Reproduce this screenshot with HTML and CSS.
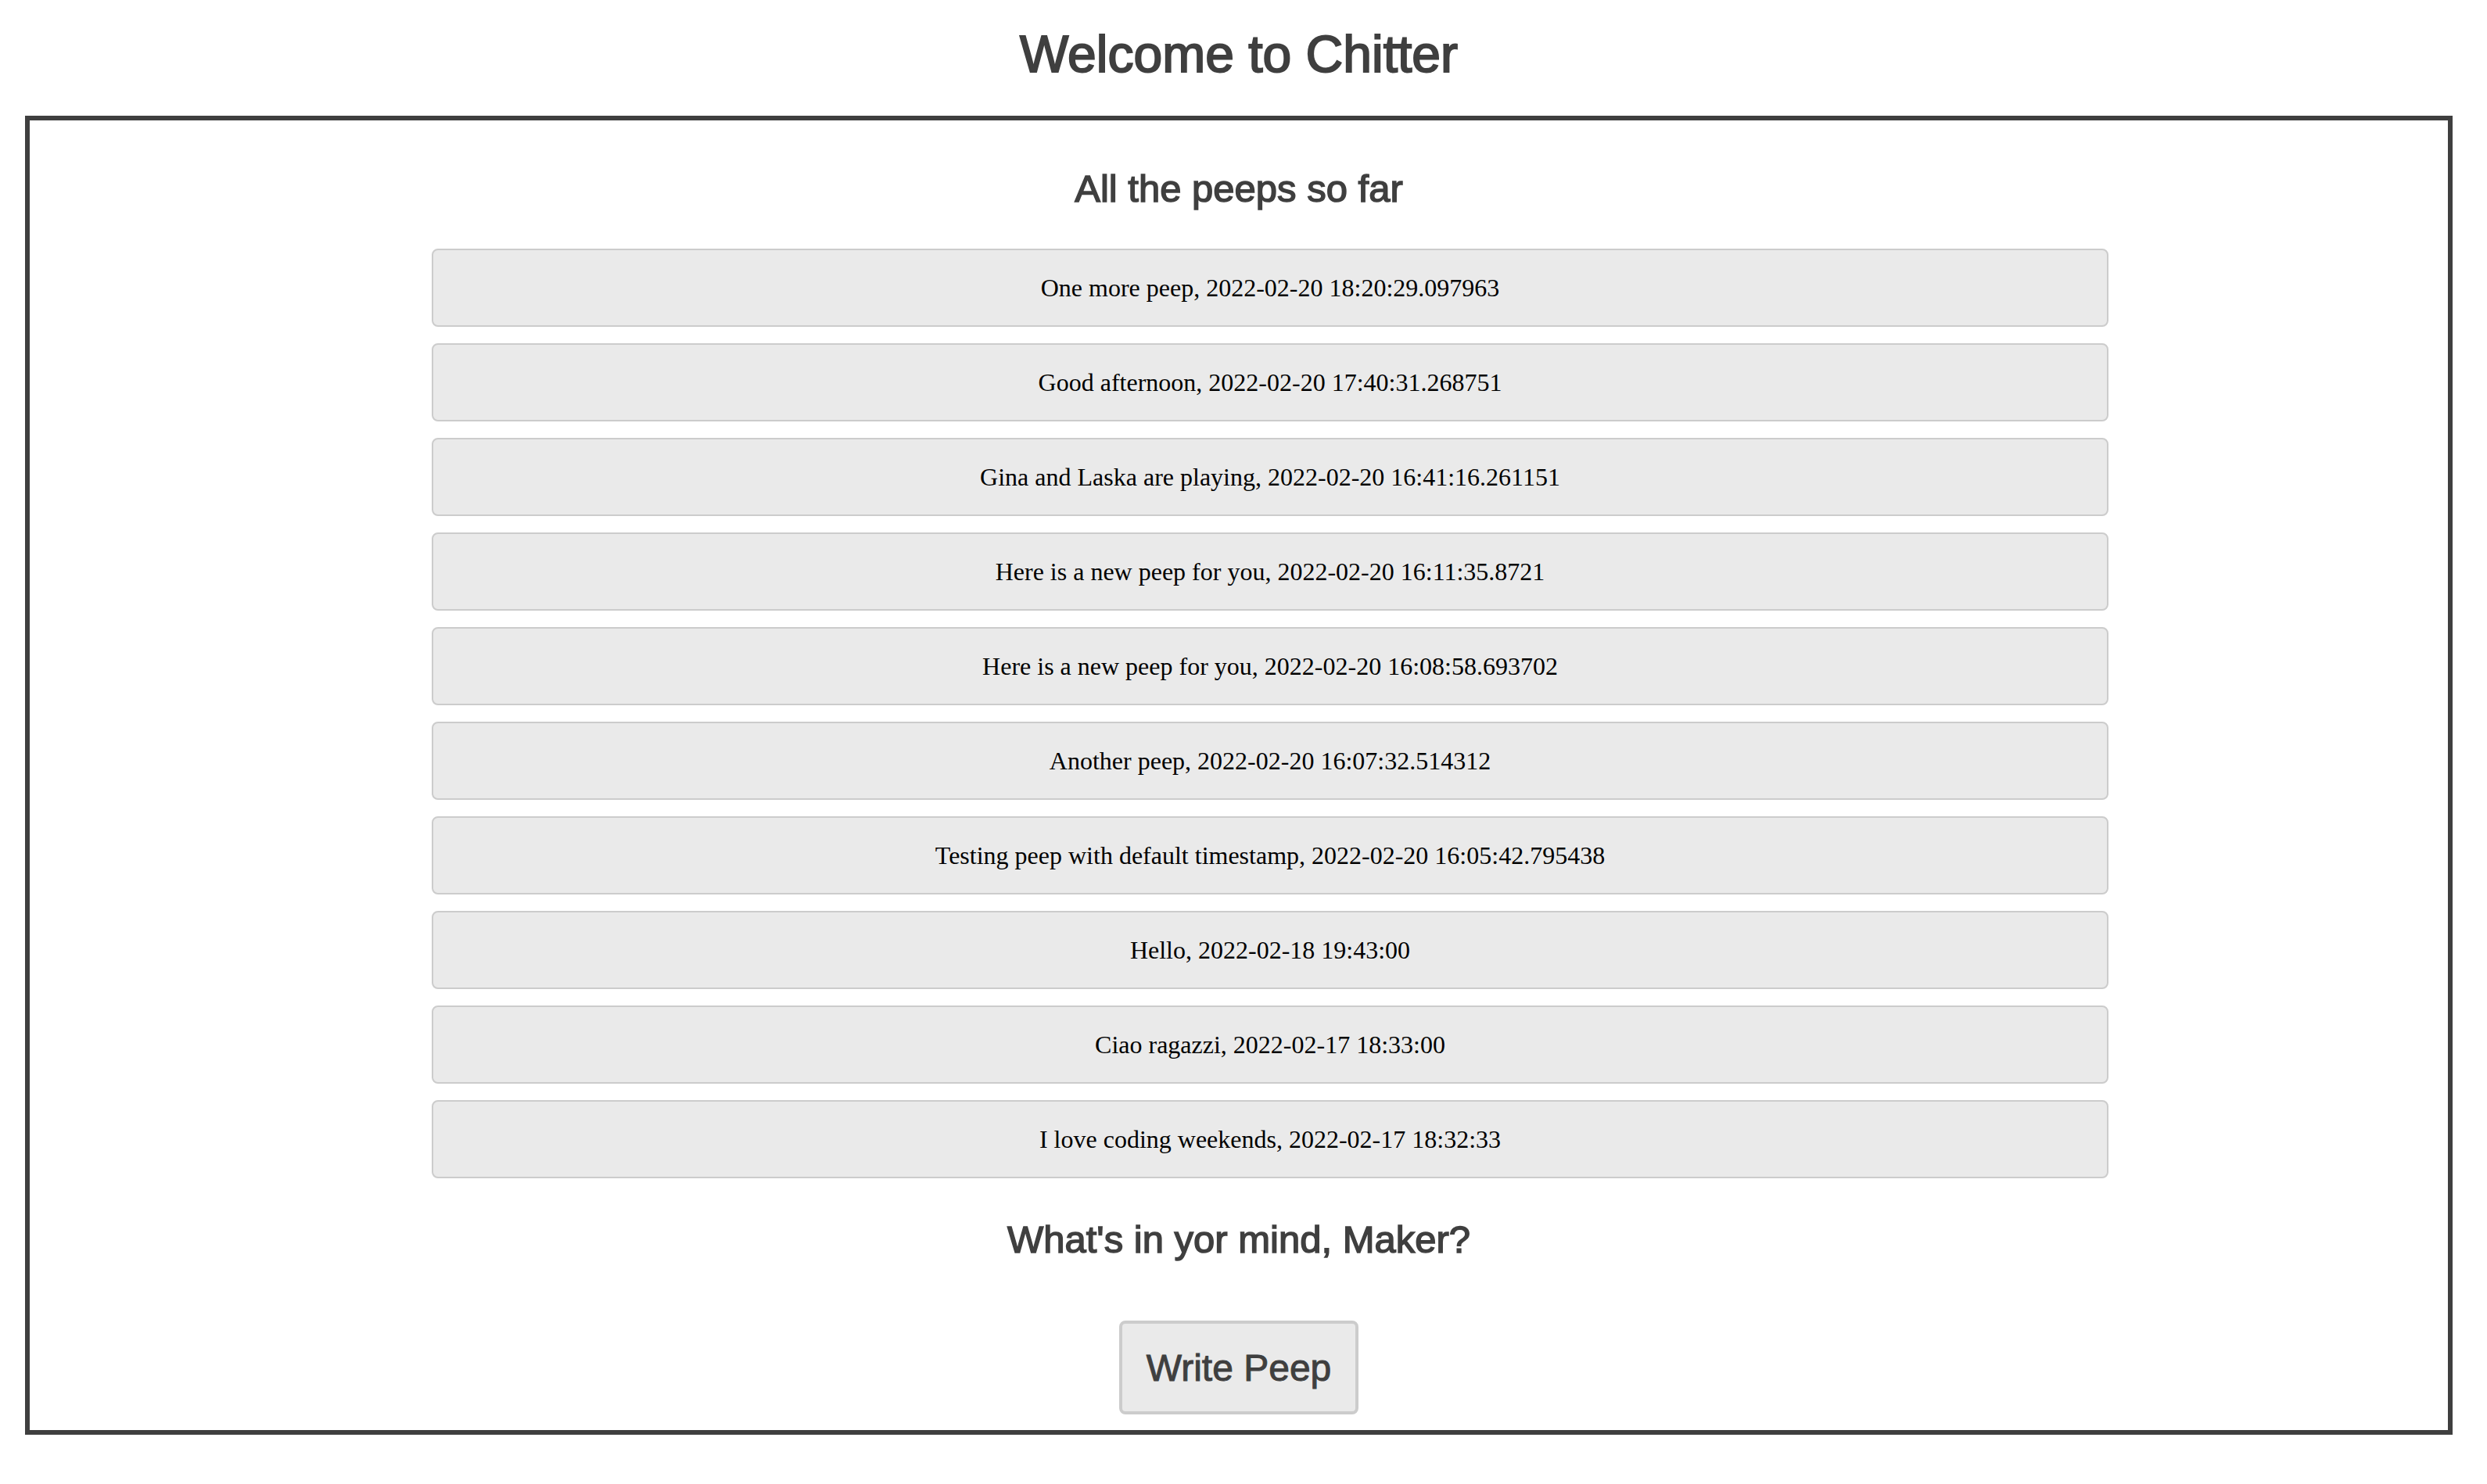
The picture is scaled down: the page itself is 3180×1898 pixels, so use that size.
FILE: index.html
```html
<!DOCTYPE html>
<html lang="en">
<head>
<meta charset="utf-8">
<title>Chitter</title>
<link rel="stylesheet" href="styles.css">
</head>
<body>
<div class="page">
  <h1 class="title">Welcome to Chitter</h1>
  <main class="frame">
    <h2 class="heading">All the peeps so far</h2>
    <ul class="peeps">
      <li class="peep">One more peep, 2022-02-20 18:20:29.097963</li>
      <li class="peep">Good afternoon, 2022-02-20 17:40:31.268751</li>
      <li class="peep">Gina and Laska are playing, 2022-02-20 16:41:16.261151</li>
      <li class="peep">Here is a new peep for you, 2022-02-20 16:11:35.8721</li>
      <li class="peep">Here is a new peep for you, 2022-02-20 16:08:58.693702</li>
      <li class="peep">Another peep, 2022-02-20 16:07:32.514312</li>
      <li class="peep">Testing peep with default timestamp, 2022-02-20 16:05:42.795438</li>
      <li class="peep">Hello, 2022-02-18 19:43:00</li>
      <li class="peep">Ciao ragazzi, 2022-02-17 18:33:00</li>
      <li class="peep">I love coding weekends, 2022-02-17 18:32:33</li>
    </ul>
    <h2 class="heading heading-mind">What's in yor mind, Maker?</h2>
    <div class="actions">
      <button class="write-btn" type="button">Write Peep</button>
    </div>
  </main>
</div>
</body>
</html>
```

FILE: styles.css
```css
html, body {
  margin: 0;
  padding: 0;
  background: #ffffff;
}

.page {
  width: 3104px;
  margin-left: 32px;
  padding-top: 31px;
  font-family: "Liberation Sans", Arial, sans-serif;
  color: #3f3f3f;
}

.title {
  margin: 0;
  font-size: 66px;
  line-height: 76px;
  font-weight: normal;
  -webkit-text-stroke: 2px #3f3f3f;
  text-align: center;
}

.frame {
  display: block;
  margin-top: 41px;
  box-sizing: border-box;
  border: 6px solid #3f3f3f;
  padding: 59px 0 20px 0;
}

.heading {
  margin: 0;
  font-size: 49px;
  line-height: 56px;
  font-weight: normal;
  -webkit-text-stroke: 1.5px #3f3f3f;
  text-align: center;
}

.peeps {
  list-style: none;
  margin: 49px 0 0 0;
  padding: 0 0 0 80px;
  display: flex;
  flex-direction: column;
  align-items: center;
  gap: 21px;
}

.peep {
  box-sizing: border-box;
  width: 2144px;
  height: 100px;
  display: flex;
  align-items: center;
  justify-content: center;
  background: #eaeaea;
  border: 2px solid #cccccc;
  border-radius: 8px;
  font-family: "Liberation Serif", "Times New Roman", serif;
  font-size: 32px;
  color: #000000;
}

.heading-mind {
  margin-top: 50px;
}

.actions {
  display: flex;
  justify-content: center;
  margin-top: 76px;
}

.write-btn {
  box-sizing: border-box;
  width: 306px;
  height: 120px;
  padding: 0;
  background: #eaeaea;
  border: 4px solid #cccccc;
  border-radius: 8px;
  font-family: "Liberation Sans", Arial, sans-serif;
  font-size: 48px;
  color: #3f3f3f;
  -webkit-text-stroke: 1px #3f3f3f;
}
```
